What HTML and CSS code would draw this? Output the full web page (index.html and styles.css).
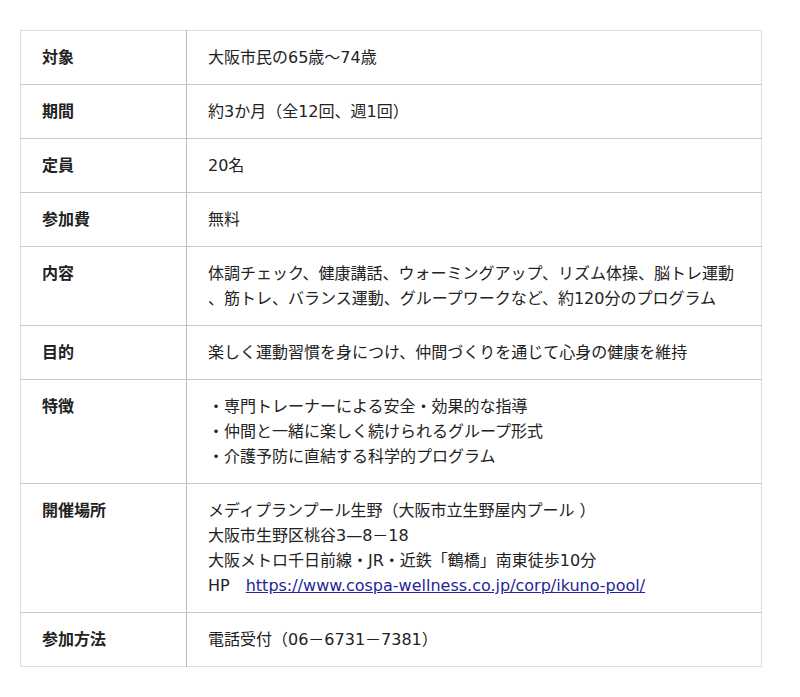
FILE: index.html
```html
<!DOCTYPE html>
<html lang="ja">
<head>
<meta charset="utf-8">
<link rel="stylesheet" href="styles.css">
</head>
<body>
<div class="wrap">
<table class="info">
  <tr><th>対象</th><td>大阪市民の65歳〜74歳</td></tr>
  <tr><th>期間</th><td>約3か月（全12回、週1回）</td></tr>
  <tr><th>定員</th><td>20名</td></tr>
  <tr><th>参加費</th><td>無料</td></tr>
  <tr><th>内容</th><td>体調チェック、健康講話、ウォーミングアップ、リズム体操、脳トレ運動<br>、筋トレ、バランス運動、グループワークなど、約120分のプログラム</td></tr>
  <tr><th>目的</th><td>楽しく運動習慣を身につけ、仲間づくりを通じて心身の健康を維持</td></tr>
  <tr><th>特徴</th><td>・専門トレーナーによる安全・効果的な指導<br>・仲間と一緒に楽しく続けられるグループ形式<br>・介護予防に直結する科学的プログラム</td></tr>
  <tr><th>開催場所</th><td>メディプランプール生野（大阪市立生野屋内プール ）<br>大阪市生野区桃谷3—8－18<br>大阪メトロ千日前線・JR・近鉄「鶴橋」南東徒歩10分<br>HP　<a href="#">https://www.cospa-wellness.co.jp/corp/ikuno-pool/</a></td></tr>
  <tr><th>参加方法</th><td>電話受付（06－6731－7381）</td></tr>
</table>
</div>
</body>
</html>
```
FILE: styles.css
```css
html, body {
  margin: 0;
  padding: 0;
  background: #fff;
}
.wrap {
  padding: 30px 38px 0 20px;
}
.info {
  width: 742px;
  border-collapse: collapse;
  border: 1px solid #dedede;
  font-family: "DejaVu Sans", "Noto Sans CJK JP", sans-serif;
  font-size: 16px;
  line-height: 25px;
  color: #222;
}
.info th,
.info td {
  padding: 14px 21px;
  vertical-align: top;
  text-align: left;
  border-top: 1px solid #c8c8c8;
  white-space: nowrap;
}
.info tr:first-child th,
.info tr:first-child td {
  border-top: 1px solid #dedede;
}
.info th {
  width: 123px;
  font-weight: bold;
  border-right: 1px solid #bdbdbd;
}
.info a {
  color: #25259a;
  text-decoration: underline;
}
```
